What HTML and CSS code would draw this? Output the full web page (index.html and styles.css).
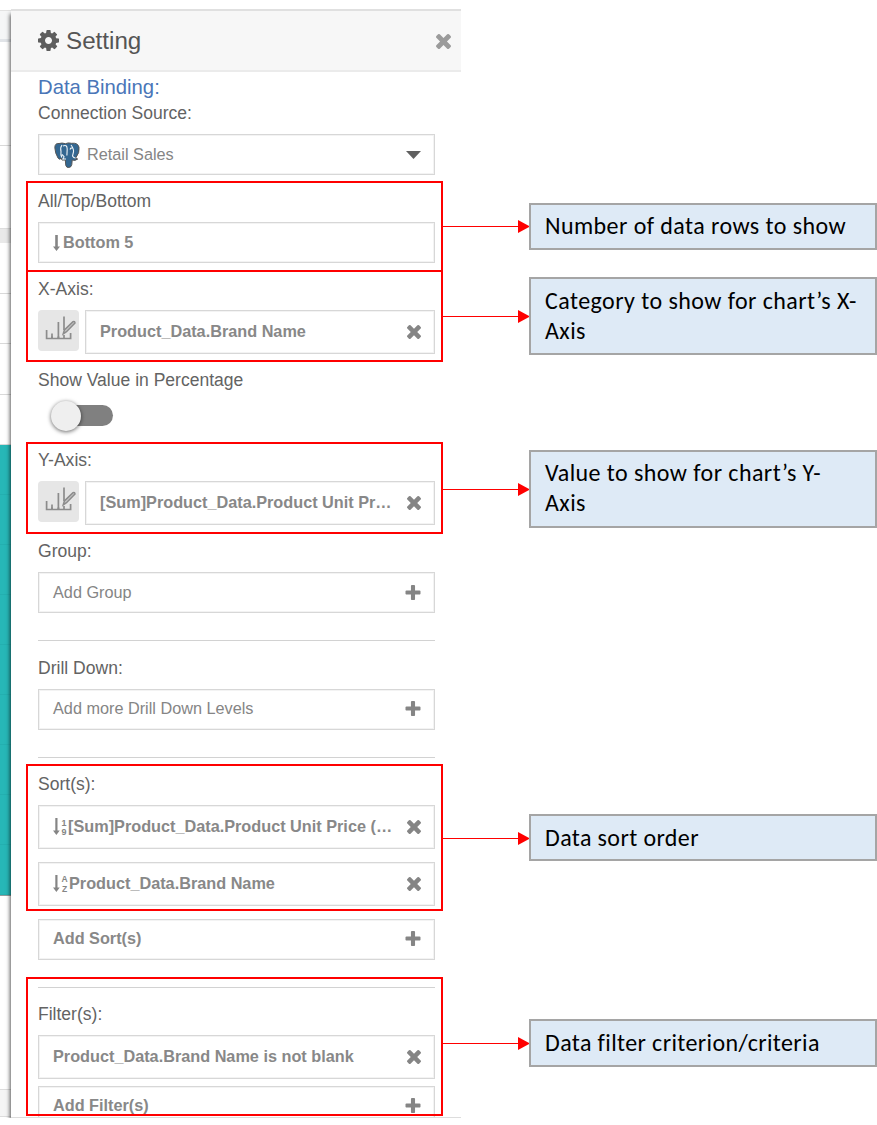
FILE: index.html
```html
<!DOCTYPE html>
<html lang="en">
<head>
<meta charset="utf-8">
<title>Setting</title>
<link rel="stylesheet" href="styles.css">
</head>
<body>
<svg class="defs" width="0" height="0" aria-hidden="true">
  <symbol id="cog" viewBox="128 128 1536 1536"><path d="M1152 896q0-106-75-181t-181-75-181 75-75 181 75 181 181 75 181-75 75-181zm512-109v222q0 12-8 23t-20 13l-185 28q-19 54-39 91 35 50 107 138 10 12 10 25t-9 23q-27 37-99 108t-94 71q-12 0-26-9l-138-108q-44 23-91 38-16 136-29 186-7 28-36 28h-222q-14 0-24.500-8.500t-11.500-21.500l-28-184q-49-16-90-37l-141 107q-10 9-25 9-14 0-25-11-126-114-165-168-7-10-7-23 0-12 8-23 15-21 51-66.500t54-70.500q-27-50-41-99l-183-27q-13-2-21-12.500t-8-23.500v-222q0-12 8-23t19-13l186-28q14-46 39-92-40-57-107-138-10-12-10-24 0-10 9-23 26-36 98.500-107.500t94.500-71.500q13 0 26 10l138 107q44-23 91-38 16-136 29-186 7-28 36-28h222q14 0 24.500 8.500t11.500 21.500l28 184q49 16 90 37l142-107q9-9 24-9 13 0 25 10 129 119 165 170 7 8 7 22 0 12-8 23-15 21-51 66.500t-54 70.500q26 50 41 98l183 28q13 2 21 12.500t8 23.500z"/></symbol>
  <symbol id="times" viewBox="302 366 1188 1188"><path d="M1490 1322q0 40-28 68l-136 136q-28 28-68 28t-68-28l-294-294-294 294q-28 28-68 28t-68-28l-136-136q-28-28-28-68t28-68l294-294-294-294q-28-28-28-68t28-68l136-136q28-28 68-28t68 28l294 294 294-294q28-28 68-28t68 28l136 136q28 28 28 68t-28 68l-294 294 294 294q28 28 28 68z"/></symbol>
  <symbol id="plus" viewBox="192 128 1408 1408"><path d="M1600 736v192q0 40-28 68t-68 28h-416v416q0 40-28 68t-68 28h-192q-40 0-68-28t-28-68v-416h-416q-40 0-68-28t-28-68v-192q0-40 28-68t68-28h416v-416q0-40 28-68t68-28h192q40 0 68 28t28 68v416h416q40 0 68 28t28 68z"/></symbol>
  <symbol id="down" viewBox="0 0 7 16"><path d="M2.200 0h2.600v11.500H7L3.500 16 0 11.500h2.200z"/></symbol>
  <symbol id="chart" viewBox="0 0 41 41"><g fill="none" stroke="#8c8c8c" stroke-width="1.700"><path d="M8.600 20v8.500h24v-5.500M14 28v-4.500M20.400 28V12M26 20V6.500M26 28v-3"/><path d="M13 27.500h2M19.400 27.500h2" stroke-width="2"/><path d="M25.200 24l1.200-4 8.600-8.400q1.800-.7 2 1.400l-8.500 8.700z" fill="#c4c4c4" stroke-width="1.500"/></g></symbol>
  <symbol id="arrow" viewBox="0 0 87 13"><path d="M0 6h76v1H0zM75 0l12 6.500L75 13z" fill="#f00"/></symbol>
</svg>

<main class="page">
  <div class="backdrop">
    <i class="bar"></i><i class="cell tall"></i><i class="cell mid"></i><i class="band"></i>
    <i class="cell row50"></i><i class="cell row50"></i><i class="cell row50"></i><i class="cell row50"></i>
    <i class="teal"></i><i class="space"></i><i class="foot"></i>
  </div>

  <section class="panel">
    <header class="head">
      <svg class="cog"><use href="#cog"/></svg>
      <h1>Setting</h1>
      <svg class="close"><use href="#times"/></svg>
    </header>
    <div class="body">
      <h2>Data Binding:</h2>
      <label class="first">Connection Source:</label>
      <div class="field light source">
        <svg class="elephant" viewBox="0 0 26 26">
          <path d="M5 1.500Q1 1 .8 5.500 1 11 4 16q2 2.500 3.300 0l.7 2h3.300l.5 5.500q.7 2.300 3 2 2.700-.3 3-3l.4-4.500q3 1.200 5.500-1l-2.200-.7q4.500-6 3.500-11Q24 .5 17.500 1.300 14 .3 11.500 1.700 8 .5 5 1.500z" fill="#336791" stroke="#555" stroke-width="1"/>
          <path d="M8 3q-2 2.500-1 6.500-.6 3 .8 6M9 4q4-2 4.200 3l-.3 6.500M10 17.500q-1-1 0-3l-2-2M17 3q3 4 2.500 7l-1 4q1 2 3 2M16 7.500q.5-2 3-1.500M8 17h4" fill="none" stroke="#eef4f8" stroke-width="1.100"/>
        </svg>
        <span>Retail Sales</span>
        <svg class="caret" viewBox="0 0 15 8"><path d="M0 0h15L7.500 8z"/></svg>
      </div>

      <label>All/Top/Bottom</label>
      <div class="field"><svg class="sort-arrow"><use href="#down"/></svg><span>Bottom 5</span></div>

      <label>X-Axis:</label>
      <div class="axis">
        <div class="chart-button"><svg><use href="#chart"/></svg></div>
        <div class="field large"><span>Product_Data.Brand Name</span><svg class="times"><use href="#times"/></svg></div>
      </div>

      <label>Show Value in Percentage</label>
      <div class="toggle"><i class="track"></i><i class="knob"></i></div>

      <label>Y-Axis:</label>
      <div class="axis">
        <div class="chart-button"><svg><use href="#chart"/></svg></div>
        <div class="field large"><span>[Sum]Product_Data.Product Unit Pr…</span><svg class="times"><use href="#times"/></svg></div>
      </div>

      <label>Group:</label>
      <div class="field light"><span>Add Group</span><svg class="plus"><use href="#plus"/></svg></div>
      <hr>
      <label class="drill">Drill Down:</label>
      <div class="field light raised"><span>Add more Drill Down Levels</span><svg class="plus"><use href="#plus"/></svg></div>
      <hr>
      <label>Sort(s):</label>
      <div class="stack">
        <div class="field large"><svg class="sort" viewBox="0 0 15 20"><path d="M2.300 1h2.200v12.500h2.200L3.400 18 0 13.500h2.300z"/><text x="8.500" y="8.500">1</text><text x="8.500" y="18">9</text></svg><span>[Sum]Product_Data.Product Unit Price (…</span><svg class="times"><use href="#times"/></svg></div>
        <div class="field large"><svg class="sort az" viewBox="0 0 16 20"><path d="M2.300 1h2.200v12.500h2.200L3.400 18 0 13.500h2.300z"/><text x="8.500" y="8">A</text><text x="9" y="18">Z</text></svg><span>Product_Data.Brand Name</span><svg class="times"><use href="#times"/></svg></div>
        <div class="field raised"><span>Add Sort(s)</span><svg class="plus"><use href="#plus"/></svg></div>
      </div>
      <hr>
      <label>Filter(s):</label>
      <div class="field large"><span>Product_Data.Brand Name is not blank</span><svg class="times"><use href="#times"/></svg></div>
      <div class="field last raised"><span>Add Filter(s)</span><svg class="plus"><use href="#plus"/></svg></div>
    </div>
  </section>

  <aside class="notes">
    <div class="note"><svg class="arrow"><use href="#arrow"/></svg><p>Number of data rows to show</p></div>
    <div class="note double category"><svg class="arrow"><use href="#arrow"/></svg><p>Category to show for chart’s X-<br>Axis</p></div>
    <div class="note double value"><svg class="arrow"><use href="#arrow"/></svg><p>Value to show for chart’s Y-<br>Axis</p></div>
    <div class="note order"><svg class="arrow"><use href="#arrow"/></svg><p>Data sort order</p></div>
    <div class="note filter"><svg class="arrow"><use href="#arrow"/></svg><p>Data filter criterion/criteria</p></div>
  </aside>

  <i class="mark mark-rows"></i>
  <i class="mark mark-x"></i>
  <i class="mark mark-y"></i>
  <i class="mark mark-sort"></i>
  <i class="mark mark-filter"></i>
</main>
</body>
</html>
```
FILE: styles.css
```css
* { box-sizing: border-box; }
body { margin: 0; background: #fff; overflow: hidden; font-family: "Liberation Sans", Arial, sans-serif; }
i { display: block; font-style: normal; }
h1, h2, p { margin: 0; font-weight: normal; }
svg { display: block; flex: none; fill: #858585; }
.defs { position: absolute; }
.page { position: relative; display: flex; width: 877px; height: 1125px; }

/* Sliver of the dashboard left of the panel */
.backdrop { width: 11px; padding-top: 10px; flex: none; }
.bar { height: 32px; background: #f5f6f7; border-top: 1px solid #e2e2e2; border-bottom: 3px solid #e1e4e8; }
.cell { border-bottom: 1px solid #d9d9d9; }
.tall { height: 104px; }
.mid { height: 82px; border: 0; }
.band { height: 15px; background: #e9e9e9; border-top: 1px solid #ddd; }
.row50 { height: 50.500px; }
.teal { height: 451px; background: repeating-linear-gradient(#27b7b7 0 49px, #24afb0 49px 50px); border-bottom: 1px solid #929c9c; }
.space { height: 193px; }
.foot { height: 28px; background: #f5f5f5; border-top: 1px solid #ddd; border-bottom: 1px solid #ddd; }

/* Settings panel */
.panel { width: 450px; flex: none; margin-top: 9px; height: 1109px; border-top: 2px solid #e0e0e0; border-bottom: 1px solid #ddd; overflow: clip; background: #fff; clip-path: inset(0 0 0 -8px); box-shadow: -1px 5px 4px rgba(0,0,0,.65); }
.head { display: flex; align-items: center; height: 61px; padding: 0 10px 0 27px; background: #f7f7f7; border-bottom: 2px solid #ebebeb; color: #555; }
.cog { width: 21px; height: 21px; fill: #5e5e5e; }
h1 { margin-left: 7px; font-size: 24.200px; line-height: 30px; }
.close { width: 15px; height: 15px; margin: 2px 0 0 auto; fill: #9b9b9b; }
.body { width: 424px; padding-left: 27px; }
h2 { font-size: 20.300px; line-height: 30px; color: #4a76b8; }
label { display: block; height: 22px; margin: 15px 0 10px; font-size: 17.550px; line-height: 22px; color: #636363; white-space: nowrap; }
label.first { margin-top: 0; }
.field { display: flex; align-items: center; height: 41px; padding: 0 13px 0 14px; border: 1px solid #d7d7d7; outline: 1px solid #f3f3f3; outline-offset: -2px; font-size: 16.260px; font-weight: bold; color: #888; white-space: nowrap; }
.large { height: 44px; flex: 1; }
.large span { margin-top: -1px; }
.light { font-weight: normal; color: #858585; }
.raised { padding-bottom: 2px; }
.source { padding-left: 15px; }
.elephant { width: 26px; height: 26px; margin-right: 7px; }
.caret { width: 15px; height: 8px; margin-left: auto; fill: #606060; }
.times { width: 14px; height: 14px; margin: 0 0 0 auto; }
.plus { width: 16px; height: 15px; margin: 0 0 0 auto; }
.sort-arrow { width: 7px; height: 16px; margin: 0 3px 0 0; }
.axis { display: flex; gap: 6px; }
.chart-button { width: 41px; height: 41px; background: #e6e6e6; border-radius: 4px; }
.chart-button svg { width: 41px; height: 41px; }
.toggle { display: flex; align-items: center; height: 43px; margin: -10px 0 0 12px; }
.track { width: 58px; height: 21px; margin: 6px 0 0 5px; border-radius: 11px; background: #808080; }
.knob { width: 30px; height: 30px; margin: 6px 0 0 -62px; border-radius: 50%; background: #efefef; box-shadow: 0 1px 4px rgba(0,0,0,.6); }
hr { height: 1px; margin: 27px 0 15px; border: 0; background: #d2d2d2; }
label.drill { margin-top: 16px; }
.stack { display: flex; flex-direction: column; gap: 13px; }
.stack .large { flex: none; }
.sort { width: 15px; height: 20px; }
.sort.az { width: 16px; }
.sort text { font-size: 9px; font-weight: bold; }
.sort.az text { font-size: 8.500px; }
.last { margin-top: 7px; }

/* Callouts, with arrows that run over the panel's right edge */
.notes { position: relative; width: 434px; margin-left: -18px; padding-top: 203px; flex: none; display: flex; flex-direction: column; }
.note { display: flex; align-items: center; height: 47px; flex: none; }
.arrow { width: 87px; height: 13px; margin-right: -1px; }
.note p { flex: 1; height: 100%; padding: 6px 0 0 14px; border: 2px solid #a5a5a5; background: #deeaf6; color: #000; font: 24px/30px Calibri, Carlito, Lato, sans-serif; letter-spacing: .43px; white-space: nowrap; }
.double { height: 78px; }
.category { margin-top: 27px; }
.category p { padding-top: 7px; }
.value { margin-top: 95px; }
.order { margin-top: 286px; }
.order .arrow { margin-top: 2px; }
.filter { margin-top: 158px; height: 48px; }
.order p, .filter p { padding-top: 7px; letter-spacing: .38px; }

/* Highlight frames drawn over the panel */
.mark { position: absolute; left: 26px; width: 417px; border: 2px solid #f00; }
.mark-rows { top: 181px; height: 91px; }
.mark-x { top: 270px; height: 92px; }
.mark-y { top: 442px; height: 92px; }
.mark-sort { top: 764px; height: 147px; }
.mark-filter { top: 977px; height: 139px; }
```
